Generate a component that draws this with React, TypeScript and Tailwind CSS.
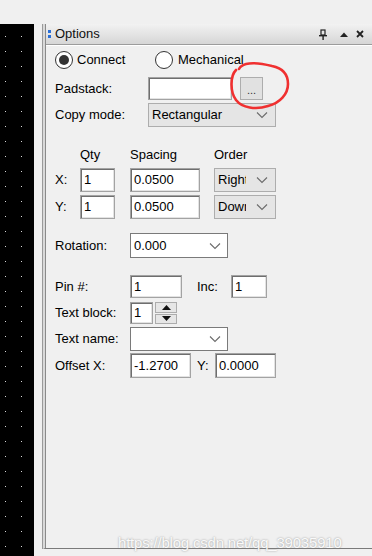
import React from "react";

const font = { fontFamily: '"Liberation Sans", Arial, sans-serif' };

function Field({ w, value, h = "h-full" }: { w: string; value?: string; h?: string }) {
  return (
    <div
      className={`${w} ${h} bg-white border border-[#a3a3a3] shadow-[inset_1px_1px_0_#6e6e6e,inset_-1px_-1px_0_#e3e3e3] flex items-center pl-[3px] text-[13px] text-black`}
    >
      {value}
    </div>
  );
}

function Chevron() {
  return (
    <svg width="12" height="8" viewBox="0 0 12 8" className="shrink-0">
      <path d="M1 1.5 L6 6.5 L11 1.5" fill="none" stroke="#6b6b6b" strokeWidth="1.1" />
    </svg>
  );
}

function GraySelect({ w, value, textW }: { w: string; value: string; textW?: string }) {
  return (
    <div
      className={`${w} h-full bg-[#e5e5e5] border border-[#adadad] flex items-center pl-[3px] pr-[7px] text-[13px] text-black`}
    >
      {textW ? (
        <span className={`${textW} overflow-hidden whitespace-nowrap`}>{value}</span>
      ) : (
        <span className="whitespace-nowrap">{value}</span>
      )}
      <span className="flex-1" />
      <Chevron />
    </div>
  );
}

function WhiteSelect({ w, value }: { w: string; value?: string }) {
  return (
    <div
      className={`${w} h-full bg-white border border-[#7a7a7a] flex items-center pl-[3px] pr-[6px] text-[13px] text-black`}
    >
      <span className="flex-1">{value}</span>
      <Chevron />
    </div>
  );
}

function CanvasDots() {
  return (
    <svg width="34" height="532" className="block">
      <defs>
        <pattern id="dots" x="0" y="0" width="34" height="15" patternUnits="userSpaceOnUse">
          <rect x="5" y="12" width="1" height="1" fill="#d8d8d8" />
          <rect x="21" y="12" width="1" height="1" fill="#d8d8d8" />
        </pattern>
      </defs>
      <rect width="34" height="532" fill="#000" />
      <rect width="34" height="532" fill="url(#dots)" />
    </svg>
  );
}

export default function App() {
  return (
    <div className="relative w-[372px] h-[556px] bg-[#f0f0f0] flex flex-col overflow-hidden" style={font}>
      {/* top strip */}
      <div className="h-[24px] shrink-0" />

      <div className="flex flex-1">
        {/* drawing canvas */}
        <div className="w-[34px] bg-black border-r border-[#3a3a3a]">
          <CanvasDots />
        </div>
        <div className="w-[8px]" />

        {/* options panel */}
        <div className="flex-1 flex flex-col h-[525px] border-l border-[#9a9a9a]">
          <div className="flex-1 flex flex-col border-l-2 border-[#d9d9d9] border-b border-b-[#7a7a7a]">
            <div className="flex-1 flex flex-col border-l border-[#8a8a8a]">
              {/* title bar */}
              <div className="h-[21px] shrink-0 flex items-center bg-gradient-to-b from-[#f2f2f2] to-[#d6d6d6] border-b border-[#9c9c9c] pl-[2px] pr-[8px]">
                <div className="flex flex-col gap-[2px] mr-[4px]">
                  <span className="w-[3px] h-[3px] bg-[#2a6fd6]" />
                  <span className="w-[3px] h-[3px] bg-[#2a6fd6]" />
                </div>
                <span className="text-[13px] text-[#111]">Options</span>
                <span className="flex-1" />
                <svg width="10" height="11" viewBox="0 0 10 11" className="mr-[12px]">
                  <rect x="3" y="1" width="4" height="5" fill="none" stroke="#222" strokeWidth="1.2" />
                  <rect x="1" y="6" width="8" height="1.4" fill="#222" />
                  <rect x="4.4" y="7" width="1.4" height="4" fill="#222" />
                </svg>
                <svg width="8" height="5" viewBox="0 0 8 5" className="mr-[8px]">
                  <path d="M0 5 L4 0.5 L8 5 Z" fill="#222" />
                </svg>
                <svg width="8" height="8" viewBox="0 0 8 8">
                  <path d="M1 1 L7 7 M7 1 L1 7" stroke="#222" strokeWidth="1.8" />
                </svg>
              </div>
              <div className="h-px bg-white" />

              {/* body */}
              <div className="flex flex-col pl-[9px] text-[13px] text-black">
                {/* radios */}
                <div className="mt-[5px] h-[18px] flex items-center">
                  <div className="w-[18px] h-[18px] rounded-full border border-[#333] bg-white flex items-center justify-center">
                    <div className="w-[10px] h-[10px] rounded-full bg-[#333]" />
                  </div>
                  <span className="ml-[4px] w-[78px]">Connect</span>
                  <div className="w-[18px] h-[18px] rounded-full border border-[#333] bg-white" />
                  <span className="ml-[5px]">Mechanical</span>
                </div>

                {/* padstack */}
                <div className="mt-[8px] h-[23px] flex items-center">
                  <span className="w-[93px]">Padstack:</span>
                  <Field w="w-[84px]" />
                  <div className="ml-[8px] w-[23px] h-[23px] bg-[#e1e1e1] border border-[#adadad] flex items-center justify-center text-[11px] text-[#333] pt-[3px]">
                    ...
                  </div>
                </div>

                {/* copy mode */}
                <div className="mt-[3px] h-[24px] flex items-center">
                  <span className="w-[93px]">Copy mode:</span>
                  <GraySelect w="w-[128px]" value="Rectangular" />
                </div>

                {/* header */}
                <div className="mt-[20px] h-[16px] flex items-center">
                  <span className="w-[25px]" />
                  <span className="w-[50px]">Qty</span>
                  <span className="w-[84px]">Spacing</span>
                  <span>Order</span>
                </div>

                {/* X */}
                <div className="mt-[5px] h-[24px] flex items-center">
                  <span className="w-[25px]">X:</span>
                  <Field w="w-[35px]" value="1" />
                  <span className="w-[15px]" />
                  <Field w="w-[70px]" value="0.0500" />
                  <span className="w-[14px]" />
                  <GraySelect w="w-[62px]" value="Right" textW="w-[28px]" />
                </div>

                {/* Y */}
                <div className="mt-[3px] h-[24px] flex items-center">
                  <span className="w-[25px]">Y:</span>
                  <Field w="w-[35px]" value="1" />
                  <span className="w-[15px]" />
                  <Field w="w-[70px]" value="0.0500" />
                  <span className="w-[14px]" />
                  <GraySelect w="w-[62px]" value="Down" textW="w-[28px]" />
                </div>

                {/* rotation */}
                <div className="mt-[14px] h-[25px] flex items-center">
                  <span className="w-[75px]">Rotation:</span>
                  <WhiteSelect w="w-[98px]" value="0.000" />
                </div>

                {/* pin */}
                <div className="mt-[17px] h-[23px] flex items-center">
                  <span className="w-[75px]">Pin #:</span>
                  <Field w="w-[52px]" value="1" />
                  <span className="w-[15px]" />
                  <span className="w-[34px]">Inc:</span>
                  <Field w="w-[36px]" value="1" />
                </div>

                {/* text block */}
                <div className="mt-[4px] h-[22px] flex items-center">
                  <span className="w-[75px]">Text block:</span>
                  <Field w="w-[23px]" value="1" />
                  <div className="ml-[2px] w-[22px] h-full flex flex-col gap-px">
                    <div className="flex-1 bg-[#e6e6e6] border border-[#acacac] flex items-center justify-center">
                      <svg width="9" height="5" viewBox="0 0 9 5">
                        <path d="M0 5 L4.5 0 L9 5 Z" fill="#111" />
                      </svg>
                    </div>
                    <div className="flex-1 bg-[#e6e6e6] border border-[#acacac] flex items-center justify-center">
                      <svg width="9" height="5" viewBox="0 0 9 5">
                        <path d="M0 0 L4.5 5 L9 0 Z" fill="#111" />
                      </svg>
                    </div>
                  </div>
                </div>

                {/* text name */}
                <div className="mt-[3px] h-[24px] flex items-center">
                  <span className="w-[75px]">Text name:</span>
                  <WhiteSelect w="w-[98px]" />
                </div>

                {/* offset */}
                <div className="mt-[2px] h-[25px] flex items-center">
                  <span className="w-[75px]">Offset X:</span>
                  <Field w="w-[61px]" value="-1.2700" />
                  <span className="w-[6px]" />
                  <span className="w-[18px]">Y:</span>
                  <Field w="w-[61px]" value="0.0000" />
                </div>
              </div>
            </div>
          </div>
        </div>
      </div>

      {/* hand-drawn red circle annotation */}
      <svg className="absolute left-[226px] top-[58px]" width="68" height="56" viewBox="0 0 68 56">
        <path
          d="M10 12 C4 18 4 34 10 42 C16 50 30 52 42 48 C54 45 62 36 62 26 C62 16 56 10 46 8 C38 6 28 4 20 6 C16 7 14 9 13 11"
          fill="none"
          stroke="#f03030"
          strokeWidth="2.6"
          strokeLinecap="round"
        />
      </svg>

      {/* watermark */}
      <div className="absolute left-[118px] top-[532px] text-[15px] text-[#fafafa] [text-shadow:0_0_2px_#8c8c8c] tracking-[-0.2px]">
        https://blog.csdn.net/qq_39035910
      </div>
    </div>
  );
}
